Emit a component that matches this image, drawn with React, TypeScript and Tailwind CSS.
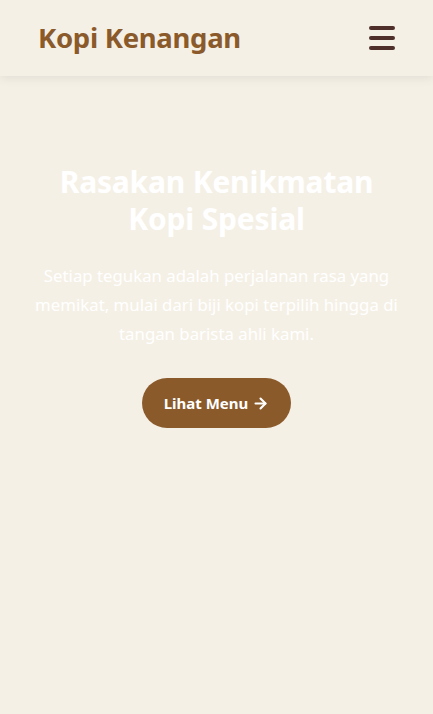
import { ArrowRight } from "lucide-react";

const App = () => {
  return (
    <div className="min-h-[714px] bg-[#f5f0e6] font-['Noto_Sans',sans-serif]">
      <header className="h-[76px] px-[38px] flex items-center justify-between bg-[#f5f0e6] shadow-[0_2px_10px_rgba(0,0,0,0.08)]">
        <h1 className="text-[27.5px] font-bold text-[#8b5a2b] tracking-[-0.3px]">Kopi Kenangan</h1>
        <button className="w-[26px] flex flex-col gap-[6px]">
          <span className="block h-[4px] rounded-full bg-[#4e2f2a]"></span>
          <span className="block h-[4px] rounded-full bg-[#4e2f2a]"></span>
          <span className="block h-[4px] rounded-full bg-[#4e2f2a]"></span>
        </button>
      </header>
      <section className="pt-[87px] px-[30px] flex flex-col items-center text-center">
        <h2 className="text-[30px] leading-[37px] font-bold text-white tracking-[-0.2px]">
          Rasakan Kenikmatan
          <br />
          Kopi Spesial
        </h2>
        <p className="mt-[24px] text-[16.8px] leading-[29px] text-white">
          Setiap tegukan adalah perjalanan rasa yang memikat, mulai dari biji kopi terpilih hingga di tangan barista ahli kami.
        </p>
        <button className="mt-[30px] h-[50px] px-[22px] rounded-full bg-[#8b5a2b] text-white text-[15px] font-bold flex items-center gap-[4px]">
          Lihat Menu
          <ArrowRight size={17} strokeWidth={3} />
        </button>
      </section>
    </div>
  );
};

export default App;
